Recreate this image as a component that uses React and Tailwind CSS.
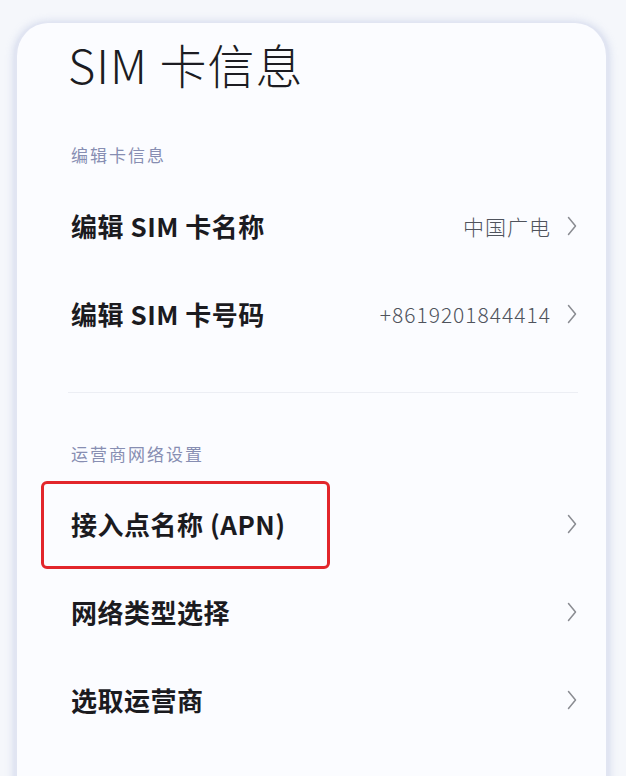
import React from "react";

const font = { fontFamily: '"Noto Sans CJK SC", "Noto Sans", sans-serif' };

function Chevron() {
  return (
    <svg width="10" height="20" viewBox="0 0 10 20" fill="none" className="shrink-0">
      <path d="M1.5 1.5 L8.5 10 L1.5 18.5" stroke="#8a8c92" strokeWidth="1.5" strokeLinecap="round" strokeLinejoin="round" />
    </svg>
  );
}

function Row({ label, value, highlight }) {
  return (
    <div className="relative h-[88px] flex items-center pl-[54px] pr-[29px]">
      <div className="flex-1 text-[26px] font-bold text-[#1b1b1f] tracking-[0.5px] leading-none">{label}</div>
      {value && (
        <div className="text-[21px] font-light text-[#4f535c] tracking-[1px] leading-none mr-[16px]">{value}</div>
      )}
      <Chevron />
      {highlight && (
        <div className="absolute left-[24px] top-[1px] w-[289px] h-[88px] border-[3px] border-[#e2262b] rounded-[6px]" />
      )}
    </div>
  );
}

function Header({ children, className }) {
  return (
    <div className={"flex items-center pl-[54px] text-[17px] text-[#878eb2] tracking-[2px] leading-none " + className}>
      {children}
    </div>
  );
}

export default function App() {
  return (
    <div style={font} className="h-[776px] overflow-hidden bg-[#f5f7fb] pt-[22px] pl-[14px] pr-[17px]">
      <div className="h-[800px] rounded-t-[34px] bg-[#fbfcff] border-x-[3px] border-t border-[#e1e5f2] shadow-[0_0_8px_rgba(160,172,215,0.45)]">
        <div className="h-[80px] flex items-center pl-[51px] text-[47px] font-light text-[#1c1c22] tracking-[1px] leading-none">
          SIM 卡信息
        </div>
        <Header className="h-[79px] pt-[23px]">编辑卡信息</Header>
        <Row label="编辑 SIM 卡名称" value="中国广电" />
        <Row label="编辑 SIM 卡号码" value="+8619201844414" />
        <div className="pt-[34px] pl-[51px] pr-[28px]">
          <div className="h-px bg-[#eceef4]" />
        </div>
        <Header className="h-[87px] pt-[33px]">运营商网络设置</Header>
        <Row label="接入点名称 (APN)" highlight />
        <Row label="网络类型选择" />
        <Row label="选取运营商" />
        <Row label="启用 VoLTE 高清通话" />
      </div>
    </div>
  );
}
